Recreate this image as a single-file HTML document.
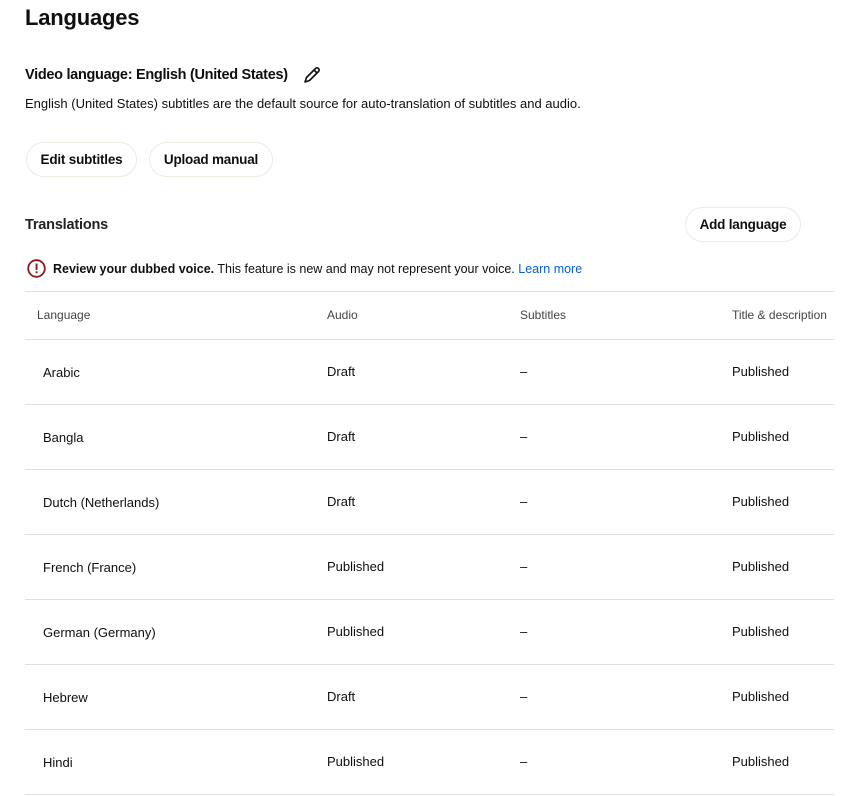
<!DOCTYPE html>
<html><head><meta charset="utf-8"><style>
*{margin:0;padding:0;box-sizing:border-box}
body{width:848px;height:796px;background:#fff;font-family:"Liberation Sans",sans-serif;color:#0f0f0f;position:relative;overflow:hidden}
.a{position:absolute;white-space:nowrap}
.btn{position:absolute;height:35px;border:1px solid #ecebe2;border-radius:18px;background:#fff;font-size:13.5px;font-weight:bold;line-height:33px;text-align:center;letter-spacing:-0.2px}
.line{position:absolute;left:25px;width:809px;height:1px;background:#e0e0e0}
.c{position:absolute;font-size:13px;color:#0f0f0f}
.h{position:absolute;font-size:12px;color:#444}
</style></head><body>
<div class="a" style="left:25px;top:5px;font-size:22px;font-weight:bold;letter-spacing:-0.2px">Languages</div>
<div class="a" style="left:25px;top:67px;font-size:14.5px;font-weight:bold;letter-spacing:-0.3px">Video language: English (United States)</div>
<svg class="a" style="left:302px;top:66px" width="20" height="19" viewBox="0 0 20 19"><path d="M3 16 L4.5 11.5 L13.5 2.5 Q15 1.2 16.5 2.5 Q17.8 4 16.5 5.5 L7.5 14.5 Z M12 4 L15 7" fill="none" stroke="#0f0f0f" stroke-width="1.6" stroke-linejoin="round"/></svg>
<div class="a" style="left:25px;top:96px;font-size:13px">English (United States) subtitles are the default source for auto-translation of subtitles and audio.</div>
<div class="btn" style="left:26px;top:142px;width:111px">Edit subtitles</div>
<div class="btn" style="left:149px;top:142px;width:124px">Upload manual</div>
<div class="a" style="left:25px;top:217px;font-size:14.5px;font-weight:bold;color:#222;letter-spacing:-0.2px">Translations</div>
<div class="btn" style="left:685px;top:207px;width:116px">Add language</div>
<svg class="a" style="left:27px;top:259px" width="19" height="19" viewBox="0 0 19 19"><circle cx="9.5" cy="9.5" r="8.3" fill="none" stroke="#8b1a1a" stroke-width="1.8"/><rect x="8.6" y="4.5" width="1.9" height="6.5" fill="#8b1a1a"/><rect x="8.6" y="12.3" width="1.9" height="2" fill="#8b1a1a"/></svg>
<div class="a" style="left:53px;top:262px;font-size:12.5px"><b>Review your dubbed voice.</b> This feature is new and may not represent your voice. <span style="color:#065fd4">Learn more</span></div>
<div class="line" style="top:291px"></div>
<div class="h" style="left:37px;top:308px">Language</div>
<div class="h" style="left:327px;top:308px">Audio</div>
<div class="h" style="left:520px;top:308px">Subtitles</div>
<div class="h" style="left:732px;top:308px">Title &amp; description</div>
<div class="line" style="top:339px"></div>

<div class="c" style="left:43px;top:365px">Arabic</div><div class="c" style="left:327px;top:364px">Draft</div><div class="c" style="left:520px;top:364px">–</div><div class="c" style="left:732px;top:364px">Published</div>
<div class="line" style="top:404px"></div>
<div class="c" style="left:43px;top:430px">Bangla</div><div class="c" style="left:327px;top:429px">Draft</div><div class="c" style="left:520px;top:429px">–</div><div class="c" style="left:732px;top:429px">Published</div>
<div class="line" style="top:469px"></div>
<div class="c" style="left:43px;top:495px">Dutch (Netherlands)</div><div class="c" style="left:327px;top:494px">Draft</div><div class="c" style="left:520px;top:494px">–</div><div class="c" style="left:732px;top:494px">Published</div>
<div class="line" style="top:534px"></div>
<div class="c" style="left:43px;top:560px">French (France)</div><div class="c" style="left:327px;top:559px">Published</div><div class="c" style="left:520px;top:559px">–</div><div class="c" style="left:732px;top:559px">Published</div>
<div class="line" style="top:599px"></div>
<div class="c" style="left:43px;top:625px">German (Germany)</div><div class="c" style="left:327px;top:624px">Published</div><div class="c" style="left:520px;top:624px">–</div><div class="c" style="left:732px;top:624px">Published</div>
<div class="line" style="top:664px"></div>
<div class="c" style="left:43px;top:690px">Hebrew</div><div class="c" style="left:327px;top:689px">Draft</div><div class="c" style="left:520px;top:689px">–</div><div class="c" style="left:732px;top:689px">Published</div>
<div class="line" style="top:729px"></div>
<div class="c" style="left:43px;top:755px">Hindi</div><div class="c" style="left:327px;top:754px">Published</div><div class="c" style="left:520px;top:754px">–</div><div class="c" style="left:732px;top:754px">Published</div>
<div class="line" style="top:794px"></div>
</body></html>
